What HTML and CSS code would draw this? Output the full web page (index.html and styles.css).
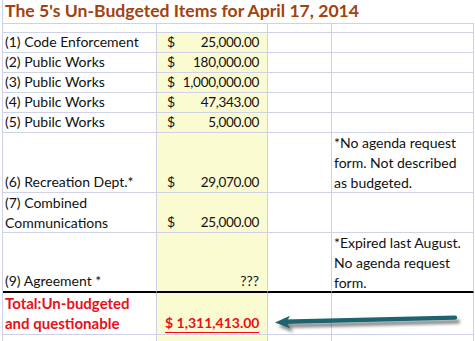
FILE: index.html
```html
<!DOCTYPE html>
<html>
<head>
<meta charset="utf-8">
<link rel="stylesheet" href="styles.css">
</head>
<body>
<div class="page">
  <div class="sheet">
    <div class="cell title">The 5's Un-Budgeted Items for April 17, 2014</div>

    <div class="cell"></div><div class="cell"></div><div class="cell"></div><div class="cell"></div>

    <div class="cell">(1) Code Enforcement</div>
    <div class="cell money"><span>$</span><span class="amt">25,000.00</span></div>
    <div class="cell"></div><div class="cell"></div>

    <div class="cell">(2) Public Works</div>
    <div class="cell money"><span>$</span><span class="amt">180,000.00</span></div>
    <div class="cell"></div><div class="cell"></div>

    <div class="cell">(3) Public Works</div>
    <div class="cell money"><span>$</span><span class="amt">1,000,000.00</span></div>
    <div class="cell"></div><div class="cell"></div>

    <div class="cell">(4) Pubilc Works</div>
    <div class="cell money"><span>$</span><span class="amt">47,343.00</span></div>
    <div class="cell"></div><div class="cell"></div>

    <div class="cell">(5) Pubilc Works</div>
    <div class="cell money"><span>$</span><span class="amt">5,000.00</span></div>
    <div class="cell"></div><div class="cell"></div>

    <div class="cell">(6) Recreation Dept.*</div>
    <div class="cell money"><span>$</span><span class="amt">29,070.00</span></div>
    <div class="cell"></div>
    <div class="cell note">*No agenda request form. Not described as budgeted.</div>

    <div class="cell wrap">(7) Combined Communications</div>
    <div class="cell money"><span>$</span><span class="amt">25,000.00</span></div>
    <div class="cell"></div><div class="cell"></div>

    <div class="cell thick">(9) Agreement *</div>
    <div class="cell money thick"><span></span><span>???</span></div>
    <div class="cell thick"></div>
    <div class="cell note thick">*Expired last August. No agenda request form.</div>

    <div class="cell total">Total:Un-budgeted and questionable</div>
    <div class="cell money total"><span class="under">$ 1,311,413.00</span></div>
    <div class="cell"></div><div class="cell"></div>

    <div class="cell"></div><div class="cell money"></div><div class="cell"></div><div class="cell"></div>
  </div>
  <svg class="arrow" width="475" height="341" viewBox="0 0 475 341">
    <defs>
      <filter id="sh" x="-10%" y="-100%" width="130%" height="400%">
        <feGaussianBlur in="SourceAlpha" stdDeviation="1.6"/>
        <feOffset dx="3" dy="4" result="b"/>
        <feComponentTransfer><feFuncA type="linear" slope="0.45"/></feComponentTransfer>
        <feMerge><feMergeNode/><feMergeNode in="SourceGraphic"/></feMerge>
      </filter>
    </defs>
    <g filter="url(#sh)">
      <line x1="455" y1="317.6" x2="284" y2="321.8" stroke="#1d6570" stroke-width="4.4" stroke-linecap="round"/>
      <path d="M275 322.5 L290 315.8 L286.5 322 L290.3 328.6 Z" fill="#1d6570"/>
    </g>
  </svg>
</div>
</body>
</html>
```

FILE: styles.css
```css
html, body {
  margin: 0;
  padding: 0;
  background: #ffffff;
}

.page {
  position: relative;
  width: 475px;
  height: 341px;
  overflow: hidden;
}

.sheet {
  margin-left: 2px;
  border-left: 1px solid #cfd2e6;
  display: grid;
  grid-template-columns: 154px 111px 64px 142px;
  grid-template-rows: 24px 9px 20px 20px 20px 20px 20px 60px 40px 60px 42px 20px;
  font-family: "Lato", "Liberation Sans", sans-serif;
  font-size: 14px;
  line-height: 20px;
  color: #111111;
}

.cell {
  box-sizing: border-box;
  border-right: 1px solid #cfd2e6;
  border-bottom: 1px solid #cfd2e6;
  padding: 0 2px;
  display: flex;
  flex-direction: column;
  justify-content: flex-end;
  white-space: nowrap;
  overflow: hidden;
}

.title {
  grid-column: 1 / -1;
  border-right: none;
  font-weight: 700;
  font-size: 17.6px;
  color: #a2420e;
  justify-content: center;
  padding-left: 2px;
  padding-bottom: 1px;
}

.wrap {
  display: block;
  white-space: normal;
  padding-right: 40px;
}

.money {
  background: #fbfbd2;
  flex-direction: row;
  justify-content: space-between;
  align-items: flex-end;
  padding: 0 8px 0 10px;
}

.amt {
  font-size: 13.5px;
  letter-spacing: -0.3px;
}

.note {
  display: block;
  white-space: normal;
  padding-left: 2px;
  padding-right: 4px;
}

.thick {
  border-bottom: 2px solid #000000;
}

.total {
  display: block;
  color: #e8101a;
  font-weight: 700;
  font-size: 15px;
  white-space: normal;
  padding-right: 10px;
}

.money.total {
  display: flex;
  justify-content: flex-start;
  font-size: 14px;
  padding-bottom: 0;
  padding-right: 8px;
}

.under {
  border-bottom: 1.5px solid #e8101a;
  line-height: 18px;
  margin-bottom: 1px;
  margin-left: -2px;
  white-space: nowrap;
}

.arrow {
  position: absolute;
  left: 0;
  top: 0;
  pointer-events: none;
}
```
